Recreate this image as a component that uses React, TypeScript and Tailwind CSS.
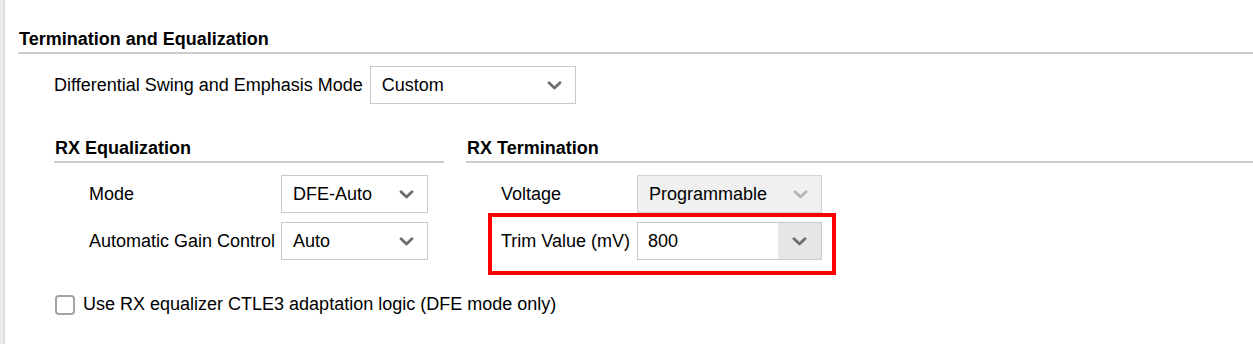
import React from 'react';

function Chevron({ color = '#6e6e6e' }: { color?: string }) {
  return (
    <svg width="15" height="9" viewBox="0 0 15 9" aria-hidden="true">
      <path d="M2 1.8 L7.5 7 L13 1.8" fill="none" stroke={color} strokeWidth="2.8" strokeLinecap="round" strokeLinejoin="round" />
    </svg>
  );
}

interface SelectProps {
  value: string;
  width: string;
  disabled?: boolean;
}

function Select({ value, width, disabled }: SelectProps) {
  return (
    <div
      className={`${width} h-[38px] flex items-center justify-between pl-[11px] pr-[13px] border ${
        disabled ? 'bg-[#f0f0f0] border-[#d2d2d2]' : 'bg-white border-[#c9c9c9]'
      }`}
    >
      <span className="leading-none">{value}</span>
      <Chevron color={disabled ? '#b5b5b5' : '#6e6e6e'} />
    </div>
  );
}

function SectionHeader({ title }: { title: string }) {
  return (
    <div className="font-bold leading-[21px] pb-[2px] pl-[1px] border-b-2 border-[#cccccc]">{title}</div>
  );
}

export default function App() {
  return (
    <div className="flex w-[1253px] h-[344px] bg-white text-black text-[18px] font-['Liberation_Sans',Arial,sans-serif] overflow-hidden">
      {/* Left panel edge */}
      <div className="w-[5px] flex-shrink-0 bg-[#ececec] border-r-2 border-[#dedede]" />

      <div className="flex-1 pl-[13px] pt-[29px]">
        <SectionHeader title="Termination and Equalization" />

        <div className="mt-[12px] pl-[36px] flex items-center gap-[7px]">
          <span>Differential Swing and Emphasis Mode</span>
          <Select value="Custom" width="w-[206px]" />
        </div>

        <div className="mt-[34px] pl-[36px] flex gap-[22px]">
          {/* RX Equalization */}
          <div className="w-[390px] flex-shrink-0">
            <SectionHeader title="RX Equalization" />
            <div className="mt-[12px] pl-[35px] flex flex-col gap-[9px]">
              <div className="flex items-center">
                <span className="w-[192px]">Mode</span>
                <Select value="DFE-Auto" width="w-[147px]" />
              </div>
              <div className="flex items-center">
                <span className="w-[192px]">Automatic Gain Control</span>
                <Select value="Auto" width="w-[147px]" />
              </div>
            </div>
          </div>

          {/* RX Termination */}
          <div className="flex-1">
            <SectionHeader title="RX Termination" />
            <div className="mt-[12px] pl-[35px] flex flex-col gap-[9px]">
              <div className="flex items-center">
                <span className="w-[136px]">Voltage</span>
                <Select value="Programmable" width="w-[185px]" disabled />
              </div>
              <div className="relative flex items-center w-[321px]">
                <span className="w-[136px]">Trim Value (mV)</span>
                <div className="w-[185px] h-[38px] flex border border-[#c9c9c9] bg-white">
                  <span className="flex-1 flex items-center pl-[10px] leading-none">800</span>
                  <span className="w-[43px] flex items-center justify-center bg-[#e6e6e6]">
                    <Chevron />
                  </span>
                </div>
                {/* Highlight annotation */}
                <div className="absolute -left-[13px] -top-[9px] -right-[14px] -bottom-[15px] border-4 border-[#ff0000] pointer-events-none" />
              </div>
            </div>
          </div>
        </div>

        <label className="mt-[31px] pl-[37px] flex items-center gap-[8px] w-fit">
          <span className="w-[20px] h-[20px] rounded-[4px] border-2 border-[#a3a3a3] bg-white flex-shrink-0" />
          <span>Use RX equalizer CTLE3 adaptation logic (DFE mode only)</span>
        </label>
      </div>
    </div>
  );
}
